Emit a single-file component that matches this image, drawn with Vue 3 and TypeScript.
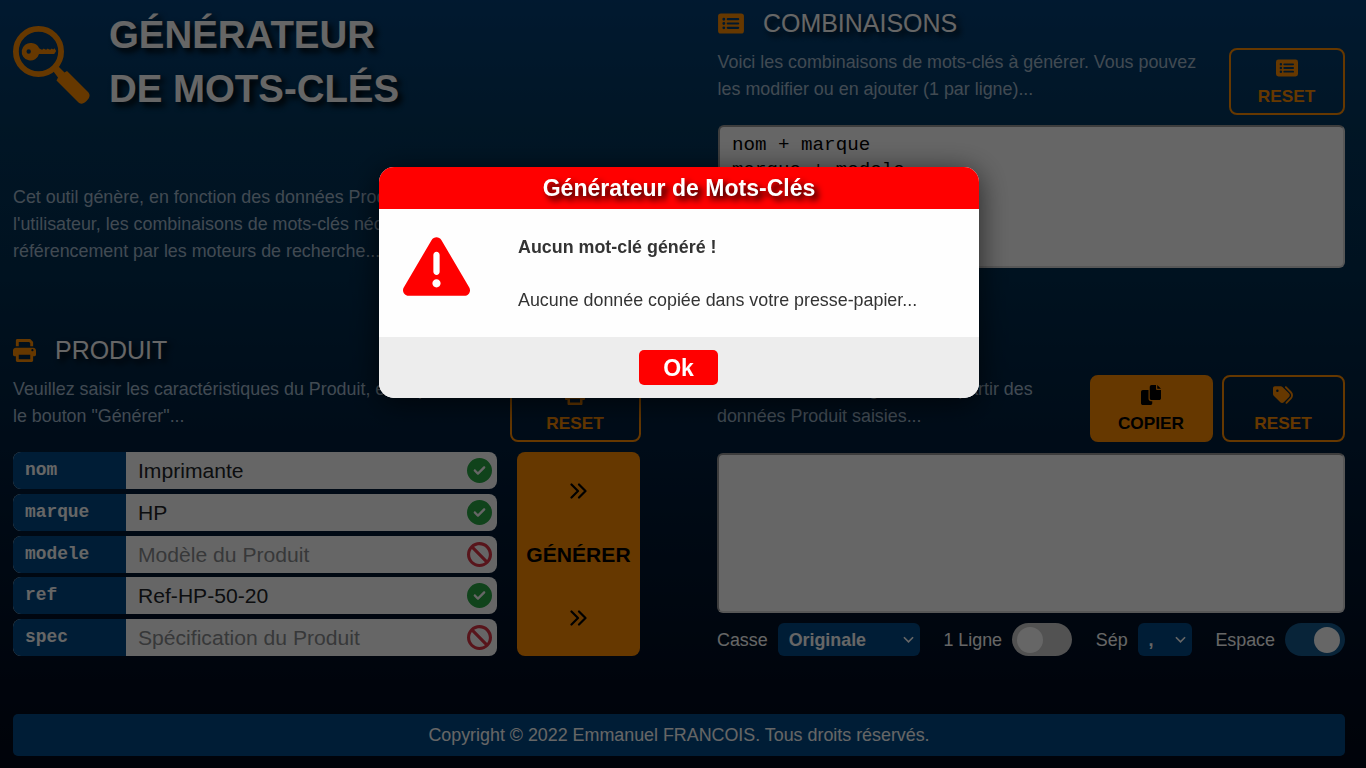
<script setup lang="ts">
import { ref } from 'vue'

interface Field { key: string; value: string; hint: string }

const fields = ref<Field[]>([
  { key: 'nom', value: 'Imprimante', hint: 'Nom du Produit' },
  { key: 'marque', value: 'HP', hint: 'Marque du Produit' },
  { key: 'modele', value: '', hint: 'Modèle du Produit' },
  { key: 'ref', value: 'Ref-HP-50-20', hint: 'Référence du Produit' },
  { key: 'spec', value: '', hint: 'Spécification du Produit' },
])
const combos = ref('nom + marque\nmarque + modele')
const output = ref('')

const icons = {
  print: 'M448 192H64C28.65 192 0 220.7 0 256v96c0 17.67 14.33 32 32 32h32v96c0 17.67 14.33 32 32 32h320c17.67 0 32-14.33 32-32v-96h32c17.67 0 32-14.33 32-32V256C512 220.7 483.3 192 448 192zM384 448H128v-96h256V448zM432 272c-13.25 0-24-10.75-24-24c0-13.27 10.75-24 24-24s24 10.73 24 24C456 261.3 445.3 272 432 272zM128 64h229.5L384 90.51V160h64V77.25c0-8.484-3.375-16.62-9.375-22.62l-45.25-45.25C387.4 3.375 379.2 0 370.8 0H96C78.34 0 64 14.33 64 32v128h64V64z',
  copy: 'M384 96L384 0h-112c-26.51 0-48 21.49-48 48v288c0 26.51 21.49 48 48 48H464c26.51 0 48-21.49 48-48V128h-95.1C398.4 128 384 113.6 384 96zM416 0v96h96L416 0zM192 352V128h-144c-26.51 0-48 21.49-48 48v288c0 26.51 21.49 48 48 48h192c26.51 0 48-21.49 48-48L288 416h-32C220.7 416 192 387.3 192 352z',
  tags: 'M345 39.1L472.8 168.4c52.4 53 52.4 138.2 0 191.2L360.8 472.9c-9.3 9.4-24.5 9.5-33.9 .2s-9.5-24.5-.2-33.9L438.6 325.9c33.9-34.3 33.9-89.4 0-123.7L310.9 72.9c-9.3-9.4-9.2-24.6 .2-33.9s24.6-9.2 33.9 .2zM0 229.5V80C0 53.5 21.5 32 48 32H197.5c17 0 33.3 6.7 45.3 18.7l168 168c25 25 25 65.5 0 90.5L277.3 442.7c-25 25-65.5 25-90.5 0l-168-168C6.7 262.7 0 246.5 0 229.5zM144 144a32 32 0 1 0 -64 0 32 32 0 1 0 64 0z',
  list: 'M64 32H512a64 64 0 0 1 64 64V416a64 64 0 0 1-64 64H64a64 64 0 0 1-64-64V96a64 64 0 0 1 64-64zM128 128a32 32 0 1 0 0 64 32 32 0 1 0 0-64zM128 224a32 32 0 1 0 0 64 32 32 0 1 0 0-64zM128 320a32 32 0 1 0 0 64 32 32 0 1 0 0-64zM216 136a24 24 0 0 0 0 48H448a24 24 0 0 0 0-48zM216 232a24 24 0 0 0 0 48H448a24 24 0 0 0 0-48zM216 328a24 24 0 0 0 0 48H448a24 24 0 0 0 0-48z',
  check: 'M256 512A256 256 0 1 0 256 0a256 256 0 1 0 0 512zM369 209L241 337c-9.4 9.4-24.6 9.4-33.9 0l-64-64c-9.4-9.4-9.4-24.6 0-33.9s24.6-9.4 33.9 0l47 47L335 175c9.4-9.4 24.6-9.4 33.9 0s9.4 24.6 0 33.9z',
  ban: 'M367.2 412.5L99.5 144.8C77.1 176.1 64 214.5 64 256c0 106 86 192 192 192c41.5 0 79.9-13.1 111.2-35.5zm45.3-45.3C434.9 335.9 448 297.5 448 256c0-106-86-192-192-192c-41.5 0-79.9 13.1-111.2 35.5L412.5 367.2zM0 256a256 256 0 1 1 512 0A256 256 0 1 1 0 256z',
  warning: 'M506.3 417l-213.3-364c-16.33-28-57.54-28-73.98 0l-213.2 364C-10.59 444.9 9.849 480 42.74 480h426.6C502.1 480 522.6 445 506.3 417zM232 168c0-13.25 10.75-24 24-24S280 154.8 280 168v128c0 13.25-10.75 24-23.1 24S232 309.3 232 296V168zM256 416c-17.36 0-31.44-14.08-31.44-31.44c0-17.36 14.07-31.44 31.44-31.44s31.44 14.08 31.44 31.44C287.4 401.9 273.4 416 256 416z',
}
</script>

<template>
  <div class="page">
    <div class="columns">
      <section class="hero">
        <div class="brand">
          <svg class="logo" viewBox="0 0 78 78">
            <circle cx="25.5" cy="25.5" r="22.6" fill="none" stroke="currentColor" stroke-width="5.8" />
            <path d="M40.500 45.500l5-5 6 6 2.500-1.500 21 21c2.500 2.500 2 5.500-1.500 9-3.500 3.200-6 3.500-8.500 1L43.500 54.500l1.500-3z" fill="currentColor" />
            <path fill-rule="evenodd" d="M18.500 17a8.800 8.800 0 0 1 7.700 5.300l2 1.200h1.500l1-1 1.500 1h1.500l1-1 1.500 1h1.500l1-1 1.500 1 1.300-1.200 1.700 2.700-2 3H26a8.800 8.800 0 1 1-7.500-11zM15.700 23.300a2.200 2.200 0 1 0 0 4.400 2.200 2.200 0 1 0 0-4.400z" fill="currentColor" />
          </svg>
          <h1>GÉNÉRATEUR<br />DE MOTS-CLÉS</h1>
        </div>
        <p>Cet outil génère, en fonction des données Produit saisies par<br />l'utilisateur, les combinaisons de mots-clés nécessaires au<br />référencement par les moteurs de recherche...</p>
      </section>

      <section class="block">
        <h2><svg class="wide" viewBox="0 0 576 512"><path fill-rule="evenodd" :d="icons.list" /></svg>COMBINAISONS</h2>
        <div class="intro">
          <p class="combo-text">Voici les combinaisons de mots-clés à générer. Vous pouvez<br />les modifier ou en ajouter (1 par ligne)...</p>
          <button class="btn combo-reset"><svg viewBox="0 0 576 512"><path fill-rule="evenodd" :d="icons.list" /></svg>RESET</button>
        </div>
        <textarea v-model="combos" class="combos"></textarea>
      </section>

      <section class="block">
        <h2><svg viewBox="0 0 512 512"><path :d="icons.print" /></svg>PRODUIT</h2>
        <div class="intro">
          <p>Veuillez saisir les caractéristiques du Produit, et cliquez sur<br />le bouton "Générer"...</p>
          <button class="btn product-reset"><svg viewBox="0 0 512 512"><path :d="icons.print" /></svg>RESET</button>
        </div>
        <div class="product">
          <div class="fields">
            <label v-for="f in fields" :key="f.key" class="field">
              <span class="key">{{ f.key }}</span>
              <input v-model="f.value" :placeholder="f.hint" />
              <svg viewBox="0 0 512 512" :class="f.value ? 'ok' : 'empty'"><path :d="f.value ? icons.check : icons.ban" /></svg>
            </label>
          </div>
          <button class="generate">
            <svg viewBox="0 0 17 16"><path d="M1.500 1.500L8 8l-6.500 6.500M9 1.500L15.500 8 9 14.500" /></svg>
            <span>GÉNÉRER</span>
            <svg viewBox="0 0 17 16"><path d="M1.500 1.500L8 8l-6.500 6.500M9 1.500L15.500 8 9 14.500" /></svg>
          </button>
        </div>
      </section>

      <section class="block">
        <h2><svg viewBox="0 0 512 512"><path :d="icons.tags" /></svg>MOTS-CLÉS</h2>
        <div class="intro">
          <p>Voici les mots-clés générés, à partir des<br />données Produit saisies...</p>
          <div class="pair">
            <button class="btn solid"><svg viewBox="0 0 512 512"><path :d="icons.copy" /></svg>COPIER</button>
            <button class="btn tags-reset"><svg viewBox="0 0 512 512"><path :d="icons.tags" /></svg>RESET</button>
          </div>
        </div>
        <textarea v-model="output" class="result"></textarea>
        <div class="options">
          <div class="option"><span>Casse</span>
            <button class="select case"><span>Originale</span><svg viewBox="0 0 12 8"><path d="M1 1l5 5 5-5" /></svg></button>
          </div>
          <div class="option"><span>1 Ligne</span><div class="toggle"><i></i></div></div>
          <div class="option"><span>Sép</span>
            <button class="select sep"><span>,</span><svg viewBox="0 0 12 8"><path d="M1 1l5 5 5-5" /></svg></button>
          </div>
          <div class="option"><span>Espace</span><div class="toggle on"><i></i></div></div>
        </div>
      </section>
    </div>
    <footer>Copyright © 2022 Emmanuel FRANCOIS. Tous droits réservés.</footer>

    <div class="overlay">
      <div class="modal">
        <header>Générateur de Mots-Clés</header>
        <div class="message">
          <svg viewBox="0 0 512 512"><path :d="icons.warning" /></svg>
          <div class="text"><b>Aucun mot-clé généré !</b><br /><br />Aucune donnée copiée dans votre presse-papier...</div>
        </div>
        <div class="actions"><button>Ok</button></div>
      </div>
    </div>
  </div>
</template>

<style>
body { margin: 0; background: #000; overflow: hidden; }
</style>

<style scoped>
* { box-sizing: border-box; }
.page { width: 1366px; height: 768px; padding: 0 21px 12px 13px; display: flex; flex-direction: column; background: linear-gradient(#044078 0, #03375e 128px, #022d50 280px, #001e3c 450px, #000c20 680px, #000818 768px); color: #fff; font: 17.88px/27px "Liberation Sans", Arial, sans-serif; }
button, input, textarea { font: inherit; margin: 0; border: 0; }
p, h1, h2 { margin: 0; }
svg { fill: currentColor; flex: none; }
.columns { display: grid; grid-template-columns: 628px 628px; grid-template-rows: 327px 387px; column-gap: 76px; }
.brand { display: flex; height: 184px; padding-top: 8px; }
.logo { width: 78px; height: 78px; margin: 18px 18px 0 0; color: #ff8c00; }
h1 { font-size: 38.4px; line-height: 54px; text-shadow: 4px 4px 6px #000; }
.hero p, .intro p { color: #a3bace; white-space: nowrap; }
.intro p { padding-top: 1px; }
.intro .combo-text { padding-left: .6px; }
h2 { display: flex; align-items: center; height: 48px; padding-bottom: 1px; font-size: 24.96px; font-weight: 400; text-shadow: 4px 4px 6px #000; }
h2 svg { width: 23px; height: 23px; margin-right: 19px; color: #ff8c00; }
h2 svg.wide { width: 26px; height: 23px; margin: 0 19px 1px 1px; }
.intro { display: flex; justify-content: space-between; height: 67px; }
.btn { display: flex; flex-direction: column; align-items: center; width: 123px; height: 67px; padding: 7px 1px 0 0; border: 2px solid #ff8c00; border-radius: 8px; background: transparent; color: #ff8c00; font-size: 17.28px; font-weight: 700; }
.btn svg { height: 20px; width: 22px; margin: 1px 0 5px; }
.btn.solid { background: #ff8c00; color: #000; }
.combo-reset { width: 116px; }
.product-reset { width: 131px; flex: none; }
.pair { display: flex; gap: 9px; }
textarea { display: block; width: 628px; padding: 6px 13px; border: 2px solid; border-color: #9a9a9a #dadada #dadada #9a9a9a; border-radius: 6px; background: #fff; color: #000; resize: none; font: 19.2px/25px "Liberation Mono", monospace; outline: 0; }
.combos { width: 627px; height: 143px; margin: 10px 0 0 1px; padding-left: 12px; }
.result { height: 160px; margin-top: 11px; }
.product { display: flex; justify-content: space-between; width: 627px; height: 204px; margin-top: 10px; }
.fields { display: flex; flex-direction: column; justify-content: space-between; width: 484px; }
.field { display: flex; align-items: center; height: 37px; padding-right: 5px; border-radius: 8px; background: #fff; overflow: hidden; }
.key { width: 113px; height: 37px; padding-left: 12px; background: #004a88; font: 700 17.88px/37px "Liberation Mono", monospace; }
.field input { flex: 1; min-width: 0; height: 37px; padding: 1px 12px 0; background: transparent; color: #212529; font-size: 21.12px; outline: 0; }
.field input::placeholder { color: #8a8d90; opacity: 1; }
.field svg { width: 25px; height: 25px; }
.ok { color: #28a745; }
.empty { color: #dc3545; }
.generate { display: flex; flex-direction: column; align-items: center; justify-content: space-between; width: 123px; padding: 31px 0 30px; border-radius: 8px; background: #ff8c00; color: #000; font-size: 21.12px; font-weight: 700; }
.generate svg { width: 17px; height: 16px; fill: none; stroke: currentColor; stroke-width: 2.2; stroke-linecap: round; stroke-linejoin: round; }
.options { display: flex; justify-content: space-between; margin-top: 10px; }
.option { display: flex; align-items: center; gap: 10px; height: 33px; }
.option span { padding-top: 1px; }
.select { display: flex; align-items: center; justify-content: space-between; height: 33px; padding: 0 6px 0 11px; border-radius: 6px; background: #004a88; color: #fff; font-weight: 700; }
.select svg { width: 11px; height: 8px; fill: none; stroke: currentColor; stroke-width: 1.8; }
.case { width: 142px; }
.sep { width: 54px; }
.toggle { display: flex; align-items: center; width: 60px; height: 33px; padding: 0 5px; border-radius: 17px; background: #ccc; }
.toggle i { width: 26px; height: 26px; border-radius: 50%; background: #fff; }
.toggle.on { justify-content: flex-end; background: #145a90; }
footer { height: 42px; border-radius: 5px; background: #004a88; text-align: center; line-height: 42px; }
.overlay { position: fixed; inset: 0; display: flex; justify-content: center; align-items: flex-start; padding: 167px 8px 0 0; background: rgba(0, 0, 0, .6); }
.modal { width: 600px; height: 231px; border-radius: 15px; background: #fefefe; color: #333; box-shadow: 0 5px 30px rgba(0, 0, 0, .65); }
.modal header { height: 42px; border-radius: 15px 15px 0 0; background: #f00; color: #fff; text-align: center; font-size: 23.04px; font-weight: 700; line-height: 42px; text-shadow: 4px 4px 6px #000; }
.message { display: flex; height: 128px; padding: 24px 24px 0; line-height: 26.5px; }
.message svg { width: 67px; height: 67px; margin-right: 48px; color: #f00; }
.text { padding-top: 1px; }
.actions { display: flex; justify-content: center; height: 61px; padding: 13px 1px 0 0; border-radius: 0 0 15px 15px; background: #ededed; }
.actions button { width: 79px; height: 35px; padding: 2px 0 0; border-radius: 5px; background: #f00; color: #fff; font-size: 23.04px; font-weight: 700; }
</style>
